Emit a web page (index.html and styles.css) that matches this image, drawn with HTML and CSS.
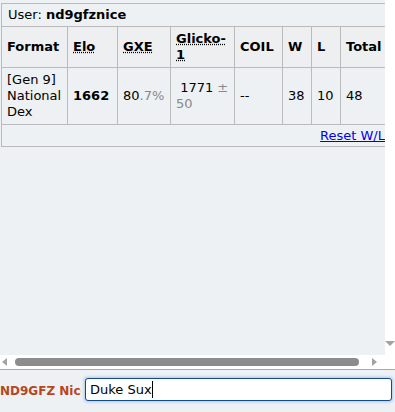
FILE: index.html
```html
<!DOCTYPE html>
<html lang="en">

<head>
    <meta charset="UTF-8">
    <meta name="viewport" content="width=device-width, initial-scale=1.0">
    <title>User stats</title>
    <link rel="stylesheet" href="styles.css">
</head>

<body>

    <div class="room">
        <div class="room-body">
            <div class="room-content">
                <table class="ladder">
                    <colgroup>
                        <col class="c-format">
                        <col class="c-elo">
                        <col class="c-gxe">
                        <col class="c-glicko">
                        <col class="c-coil">
                        <col class="c-w">
                        <col class="c-l">
                        <col class="c-total">
                    </colgroup>
                    <tr>
                        <td class="user-cell" colspan="8">User: <strong>nd9gfznice</strong></td>
                    </tr>
                    <tr class="head">
                        <th>Format</th>
                        <th><abbr title="Elo rating">Elo</abbr></th>
                        <th><abbr title="user's percentage chance of winning a random battle">GXE</abbr></th>
                        <th><abbr title="Glicko-1 rating system">Glicko-1</abbr></th>
                        <th>COIL</th>
                        <th>W</th>
                        <th>L</th>
                        <th>Total</th>
                    </tr>
                    <tr>
                        <td>[Gen 9] National Dex</td>
                        <td><strong>1662</strong></td>
                        <td>80<span class="dim">.7%</span></td>
                        <td class="glicko">&nbsp;1771 <span class="dim">± 50</span></td>
                        <td>--</td>
                        <td>38</td>
                        <td>10</td>
                        <td>48</td>
                    </tr>
                    <tr>
                        <td class="reset-cell" colspan="8"><a href="#">Reset W/L</a></td>
                    </tr>
                </table>
            </div>
            <!-- vertical scrollbar, only its lower arrow is on screen -->
            <div class="vscroll">
                <span class="arrow-down"></span>
            </div>
        </div>

        <div class="hscroll">
            <span class="arrow-left"></span>
            <span class="thumb"></span>
            <span class="arrow-right"></span>
        </div>
    </div>

    <div class="chatbar">
        <label class="chat-name">ND9GFZ Nice:</label>
        <div class="textbox">Duke Sux<span class="caret"></span></div>
    </div>

</body>

</html>
```

FILE: styles.css
```css
* {
    margin: 0;
    padding: 0;
    box-sizing: border-box;
}

body {
    width: 395px;
    height: 412px;
    overflow: hidden;
    font-family: "DejaVu Sans", Verdana, sans-serif;
    font-size: 13px;
    line-height: 16px;
    color: #000;
    background: #edf1f4;
}

.room {
    background: #fff;
}

.room-body {
    display: flex;
    height: 355px;
}

.room-content {
    width: 385px;
    overflow: hidden;
    background: #edf1f4;
    padding: 3px 0 0 1px;
}

.vscroll {
    width: 10px;
    display: flex;
    flex-direction: column;
    justify-content: flex-end;
    align-items: flex-end;
    padding-bottom: 9px;
}

.arrow-down {
    width: 0;
    height: 0;
    border-left: 5px solid transparent;
    border-right: 5px solid transparent;
    border-top: 5px solid #a3a3a3;
}

/* table */
.ladder {
    border-collapse: collapse;
    border: 1px solid #bbb;
    width: 393px;
    table-layout: fixed;
}

.ladder td,
.ladder th {
    border: 1px solid #bbb;
    padding: 4px 5px;
    text-align: left;
    vertical-align: middle;
}

.ladder th {
    background: #eeeff0;
    font-weight: bold;
}

.ladder .user-cell {
    padding: 3px 6px;
}

.ladder abbr {
    text-decoration: underline dotted;
}

.c-format { width: 66px; }
.c-elo { width: 50px; }
.c-gxe { width: 53px; }
.c-glicko { width: 64px; }
.c-coil { width: 48px; }
.c-w { width: 29px; }
.c-l { width: 29px; }

.dim {
    color: #888;
}

.ladder .glicko {
    padding-right: 2px;
}

.ladder .reset-cell {
    text-align: right;
    padding: 3px 8px 2px;
}

.reset-cell a {
    color: #00e;
}

/* horizontal scrollbar */
.hscroll {
    height: 15px;
    display: flex;
    align-items: center;
    padding: 0 18px 0 2px;
    border-bottom: 1px solid #a9a9a9;
}

.arrow-left,
.arrow-right {
    width: 0;
    height: 0;
    border-top: 4px solid transparent;
    border-bottom: 4px solid transparent;
}

.arrow-left {
    border-right: 5px solid #a3a3a3;
}

.arrow-right {
    border-left: 5px solid #a3a3a3;
}

.thumb {
    height: 8px;
    margin: 0 13px 0 8px;
    flex: 1;
    border-radius: 4px;
    background: #8c8c8c;
}

/* chat input */
.chatbar {
    display: flex;
    align-items: center;
    height: 41px;
    padding: 0 3px 0 0;
}

.chat-name {
    width: 81px;
    overflow: hidden;
    white-space: nowrap;
    color: #b6461c;
    font-size: 12px;
    font-weight: bold;
    margin-right: 4px;
}

.textbox {
    flex: 1;
    height: 23px;
    margin-top: -2px;
    padding: 2px 4px;
    background: #fff;
    border: 1px solid #164a8c;
    border-radius: 3px;
    box-shadow: 0 0 3px 1px #a9c6e6;
    font-size: 13px;
    line-height: 17px;
}

.caret {
    display: inline-block;
    width: 1px;
    height: 17px;
    vertical-align: top;
    background: #000;
}
```
